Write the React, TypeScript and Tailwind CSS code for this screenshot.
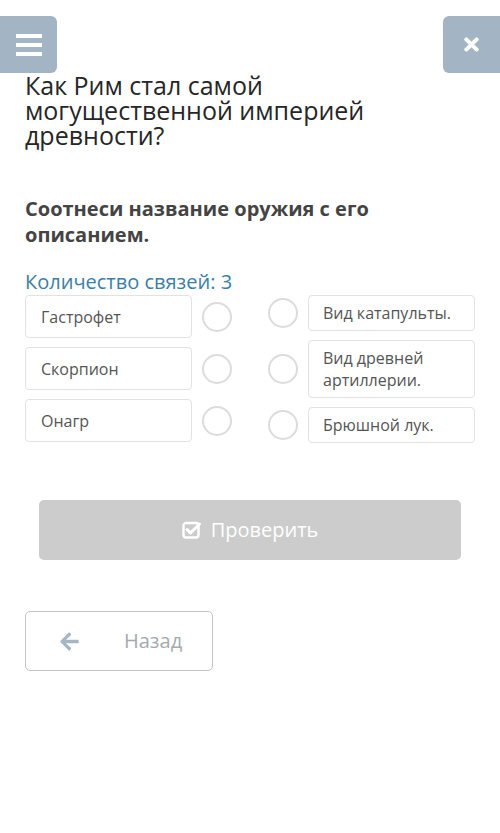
import { FaArrowLeft, FaTimes } from "react-icons/fa";

const LEFT = ["Гастрофет", "Скорпион", "Онагр"];
const RIGHT = ["Вид катапульты.", "Вид древней артиллерии.", "Брюшной лук."];

function Circle() {
  return <div className="w-[30px] h-[30px] shrink-0 rounded-full border-2 border-[#dcdcdc] bg-white" />;
}

export default function App() {
  return (
    <main
      className="w-[500px] min-h-[833px] bg-white text-[#333]"
      style={{ fontFamily: '"Open Sans", "Noto Sans", sans-serif' }}
    >
      {/* Top bar */}
      <div className="flex justify-between pt-[16px]">
        <button className="w-[57px] h-[57px] rounded-r-[6px] bg-[#a3b5c4] flex flex-col items-center justify-center gap-[5px]">
          <span className="block w-[26px] h-[4px] bg-white" />
          <span className="block w-[26px] h-[4px] bg-white" />
          <span className="block w-[26px] h-[4px] bg-white" />
        </button>
        <button className="w-[57px] h-[57px] rounded-l-[6px] bg-[#a3b5c4] flex items-center justify-center">
          <FaTimes className="text-white w-[21px] h-[21px]" />
        </button>
      </div>

      <div className="px-[25px]">
        <h1 className="w-[380px] text-[25px] leading-[25px] font-normal text-[#262626]">
          Как Рим стал самой могущественной империей древности?
        </h1>

        <p className="w-[420px] mt-[48px] text-[20px] leading-[26px] font-bold text-[#444]">
          Соотнеси название оружия с его описанием.
        </p>

        <p className="mt-[21px] text-[20px] leading-[26px] text-[#3b7ea6]">Количество связей: 3</p>

        {/* Matching */}
        <div className="flex justify-between text-[16px] leading-[22px] text-[#555]">
          <div className="flex flex-col gap-[9px] w-[207px]">
            {LEFT.map((t) => (
              <div key={t} className="flex items-center gap-[10px]">
                <div className="w-[167px] h-[43px] flex items-center px-[15px] border border-[#e2e2e2] rounded-[4px]">
                  {t}
                </div>
                <Circle />
              </div>
            ))}
          </div>
          <div className="flex flex-col gap-[9px] w-[207px]">
            {RIGHT.map((t) => (
              <div key={t} className="flex items-center gap-[10px]">
                <Circle />
                <div className="w-[167px] py-[6px] px-[14px] border border-[#e2e2e2] rounded-[4px]">{t}</div>
              </div>
            ))}
          </div>
        </div>
      </div>

      <div className="px-[39px] mt-[57px]">
        <button className="w-full h-[60px] rounded-[5px] bg-[#cccccc] flex items-center justify-center gap-[9px] text-white text-[20px]">
          <svg width="20" height="18" viewBox="0 0 20 18" fill="none" className="shrink-0">
            <rect x="1.5" y="2" width="15" height="14.5" rx="2.5" stroke="white" strokeWidth="2.4" />
            <path d="M5 8.5 L8.5 12 L17.5 3" stroke="white" strokeWidth="3" strokeLinecap="round" strokeLinejoin="round" />
          </svg>
          Проверить
        </button>
      </div>

      <div className="px-[25px] mt-[51px]">
        <button className="w-[188px] h-[60px] rounded-[5px] border border-[#c4c4c4] bg-white flex items-center">
          <FaArrowLeft className="ml-[33px] w-[21px] h-[21px] text-[#a5b6c4]" />
          <span className="ml-[44px] text-[20px] text-[#a3aab0]">Назад</span>
        </button>
      </div>
    </main>
  );
}
